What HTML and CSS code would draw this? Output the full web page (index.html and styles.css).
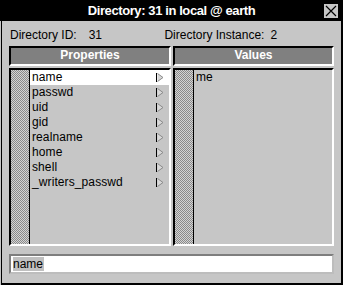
FILE: index.html
```html
<!DOCTYPE html>
<html lang="en">
<head>
    <meta charset="UTF-8">
    <title>Directory: 31 in local @ earth</title>
    <link rel="stylesheet" href="styles.css">
</head>
<body>
    <div class="window">
        <div class="titlebar">
            <span class="title">Directory: 31 in local @ earth</span>
            <span class="close">
                <svg width="14" height="14" viewBox="0 0 14 14">
                    <path d="M2 2 L12 12 M12 2 L2 12" stroke="#000" stroke-width="1.2" fill="none"/>
                </svg>
            </span>
        </div>

        <div class="content">
            <div class="info">
                <span class="info-label">Directory ID:</span><span class="info-id">31</span>
                <span class="info-label inst">Directory Instance:</span><span class="info-inst">2</span>
            </div>

            <div class="columns">
                <div class="col">
                    <div class="col-head">Properties</div>
                    <div class="list">
                        <div class="stripe"></div>
                        <ul class="rows">
                            <li class="row selected">name<span class="arrow"></span></li>
                            <li class="row">passwd<span class="arrow"></span></li>
                            <li class="row">uid<span class="arrow"></span></li>
                            <li class="row">gid<span class="arrow"></span></li>
                            <li class="row">realname<span class="arrow"></span></li>
                            <li class="row">home<span class="arrow"></span></li>
                            <li class="row">shell<span class="arrow"></span></li>
                            <li class="row">_writers_passwd<span class="arrow"></span></li>
                        </ul>
                    </div>
                </div>
                <div class="col">
                    <div class="col-head">Values</div>
                    <div class="list">
                        <div class="stripe"></div>
                        <ul class="rows">
                            <li class="row">me</li>
                        </ul>
                    </div>
                </div>
            </div>

            <div class="field"><span class="field-sel">name</span></div>
        </div>
    </div>

    <script>
        // cascade arrows drawn once for every property row
        var arrowSvg = '<svg width="8" height="9" viewBox="0 0 8 9">' +
            '<path d="M1.5 0.5 L7 4.5 L1.5 8.5" stroke="#8a8a8a" fill="#d8d8d8"/>' +
            '<path d="M0.5 0 L0.5 9" stroke="#000"/></svg>';
        var arrows = document.querySelectorAll('.arrow');
        for (var i = 0; i < arrows.length; i++) {
            arrows[i].innerHTML = arrowSvg;
        }
    </script>
</body>
</html>
```

FILE: styles.css
```css
html, body {
    margin: 0;
    padding: 0;
    background-color: #c6c6c6;
}
body {
    width: 343px;
    height: 285px;
    overflow: hidden;
    font-family: "Liberation Sans", Arial, sans-serif;
    font-size: 12px;
    color: #000;
}
.window {
    box-sizing: border-box;
    width: 342px;
    height: 285px;
    margin-left: 1px;
    border-left: 1px solid #000;
    border-right: 2px solid #000;
    border-bottom: 2px solid #000;
    background-color: #c6c6c6;
}
.titlebar {
    height: 21px;
    margin-left: -2px;
    background-color: #000;
    display: flex;
    align-items: center;
    position: relative;
}
.title {
    flex: 1;
    text-align: center;
    color: #fff;
    font-weight: bold;
    font-size: 13px;
    letter-spacing: -0.4px;
    padding-left: 2px;
}
.close {
    position: absolute;
    right: 3px;
    top: 4px;
    width: 14px;
    height: 14px;
    background-color: #c6c6c6;
}
.close svg {
    display: block;
}
.content {
    padding: 0 7px;
}
.info {
    margin-top: 7px;
    height: 14px;
    line-height: 14px;
    padding-left: 1px;
    white-space: nowrap;
}
.info-id {
    margin-left: 12px;
}
.inst {
    margin-left: 59px;
}
.info-inst {
    margin-left: 6px;
}
.columns {
    margin-top: 4px;
    display: grid;
    grid-template-columns: 162px 1fr;
    column-gap: 2px;
}
.col-head {
    box-sizing: border-box;
    height: 20px;
    border: 2px solid;
    border-color: #000 #fff #fff #000;
    background-color: #808080;
    color: #fff;
    font-weight: bold;
    text-align: center;
    line-height: 15px;
}
.list {
    box-sizing: border-box;
    height: 178px;
    margin-top: 2px;
    border: 2px solid;
    border-color: #000 #fff #fff #000;
    display: flex;
}
.stripe {
    width: 18px;
    border-right: 1px solid #000;
    background: repeating-conic-gradient(#8a8a8a 0 25%, #d4d4d4 0 50%) 0 0 / 2px 2px;
}
.rows {
    flex: 1;
    list-style: none;
    margin: 0;
    padding: 0;
}
.row {
    height: 15px;
    line-height: 15px;
    padding-left: 2px;
    display: flex;
    align-items: center;
    letter-spacing: 0.1px;
}
.row.selected {
    background-color: #fff;
}
.arrow {
    margin-left: auto;
    margin-right: 5px;
    height: 9px;
}
.arrow svg {
    display: block;
}
.field {
    box-sizing: border-box;
    height: 20px;
    margin-top: 8px;
    border: 2px solid;
    border-color: #7e7e7e #bdbdbd #bdbdbd #7e7e7e;
    background-color: #fff;
    padding: 0 0 0 2px;
    display: flex;
    align-items: center;
}
.field-sel {
    background-color: #c0c0c0;
    line-height: 14px;
    padding-right: 1px;
}
```
